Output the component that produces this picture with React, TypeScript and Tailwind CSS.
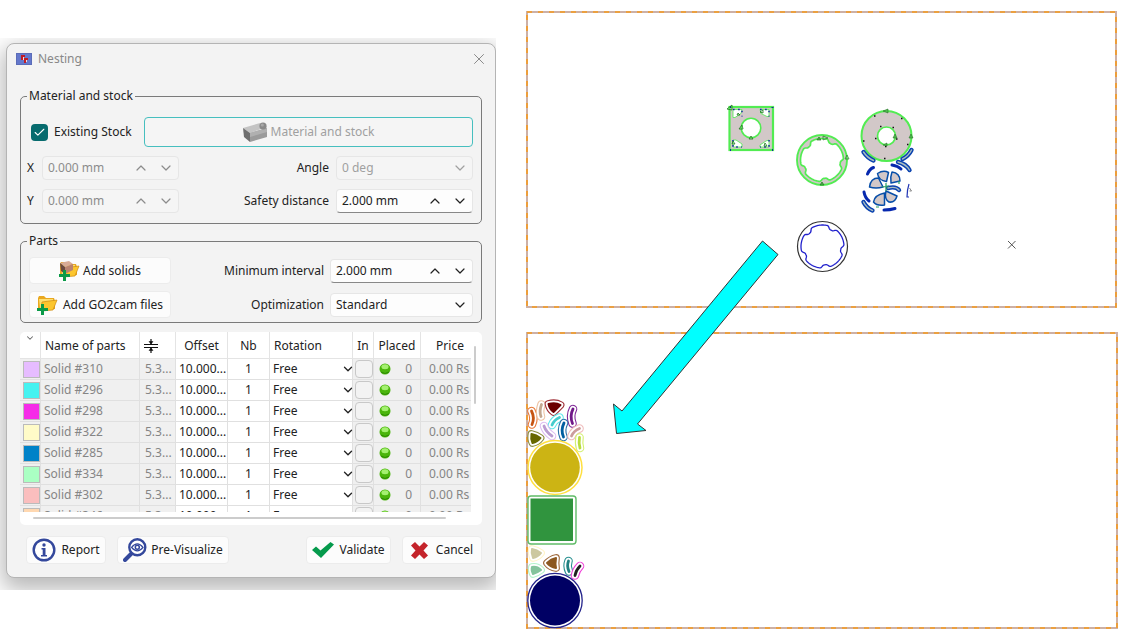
import { ReactNode } from "react";
import { Check, ChevronDown, ChevronUp, X } from "lucide-react";

interface Part {
  name: string;
  color: string;
}

const parts: Part[] = [
  { name: "Solid #310", color: "#e6bcff" },
  { name: "Solid #296", color: "#45f2f0" },
  { name: "Solid #298", color: "#f52be8" },
  { name: "Solid #322", color: "#fffbc8" },
  { name: "Solid #285", color: "#0082c8" },
  { name: "Solid #334", color: "#aaffc3" },
  { name: "Solid #302", color: "#fabebe" },
  { name: "Solid #346", color: "#ffd8b1" },
];

/* ---------- icons ---------- */

function NestingIcon() {
  return (
    <svg width="16" height="12" viewBox="0 0 16 12">
      <rect width="16" height="12" fill="#5b6cb8" />
      <rect x="1" y="1" width="14" height="10" fill="#6478cc" />
      <path d="M5 2h4v2H7v3H5zM8 5h4v2h-2v3H8z" fill="#c01c24" />
      <path d="M7 4h1v3H7zM10 7h1v2h-1z" fill="#f4dcdc" />
    </svg>
  );
}

function StockIcon() {
  return (
    <svg width="24" height="20" viewBox="0 0 24 20">
      <path d="M0 6 17 1l7 4-17 6z" fill="#c4c4c4" />
      <path d="m0 6 7 5v9l-6-5z" fill="#6f6f6f" />
      <path d="m7 11 17-5v9L7 20z" fill="#9b9b9b" />
      <path d="m7 11 17-5v4L7 15z" fill="#b0b0b0" />
      <circle cx="20" cy="4" r="3.6" fill="#8a8a8a" />
      <circle cx="19.3" cy="3" r="1.6" fill="#a9a9a9" />
    </svg>
  );
}

function FolderIcon({ solid }: { solid?: boolean }) {
  return (
    <svg width="21" height="20" viewBox="0 0 21 20">
      <path d="M1 3 2 1h5l2 2h8l1 3v8L4 16 1 13z" fill="#e9a820" />
      <path d="M2 4h14v9H3z" fill="#ffdf70" />
      <path d="m5 7 15-2-4 10-12 1z" fill="#fcc62e" stroke="#cf8a10" strokeWidth="0.7" />
      {solid && (
        <>
          <path d="m1 2 9-2 4 3-8 3z" fill="#d8ab96" />
          <path d="m1 2 5 4v7l-4-3z" fill="#6b4a40" />
          <path d="m6 6 8-3v6l-8 4z" fill="#b98371" />
        </>
      )}
      <path d="M4 9h3v4h4v3H7v4H4v-4H0v-3h4z" fill="#0b9a48" />
    </svg>
  );
}

function HeightIcon() {
  return (
    <svg width="14" height="16" viewBox="0 0 14 16" stroke="#111" fill="#111">
      <path d="M0 6.5h14M0 9.5h14" strokeWidth="1.2" />
      <path d="M7 1v5M7 10v5" strokeWidth="1.2" />
      <path d="M5 3.500h4L7 6zM5 12.500h4L7 10z" strokeWidth="0.5" />
    </svg>
  );
}

function InfoIcon() {
  return (
    <svg width="24" height="24" viewBox="0 0 24 24">
      <circle cx="12" cy="12" r="10.3" fill="#fff" stroke="#34489c" strokeWidth="2.4" />
      <circle cx="12" cy="7" r="1.7" fill="#34489c" />
      <path d="M9.5 10h4v7h1.5v1.6H9V17h1.7v-5.4H9.5z" fill="#34489c" />
    </svg>
  );
}

function PreviewIcon() {
  return (
    <svg width="24" height="24" viewBox="0 0 24 24" fill="none" stroke="#34489c">
      <path d="m2 22 6.5-6.5" strokeWidth="4" strokeLinecap="round" />
      <circle cx="14.3" cy="9.3" r="8" fill="#fff" strokeWidth="2.4" />
      <path d="M8.6 9.3q5.7-7 11.4 0-5.7 7-11.4 0z" strokeWidth="1.3" />
      <circle cx="14.3" cy="9.3" r="2" strokeWidth="1.5" />
    </svg>
  );
}

function ValidateIcon() {
  return (
    <svg width="22" height="16" viewBox="0 0 22 16">
      <path d="m0 8 4-3.5 4.5 4L18.500 0 22 2.500 9 16z" fill="#059a4c" />
    </svg>
  );
}

function CancelIcon() {
  return (
    <svg width="17" height="17" viewBox="0 0 17 17">
      <path
        d="M4 0 8.500 4.500 13 0l4 3.500-4.500 5 4.500 5L13 17l-4.500-4.500L4 17 0 13.500l4.500-5L0 3.500z"
        fill="#c4242b"
      />
    </svg>
  );
}

function Led() {
  return (
    <svg width="12" height="12" viewBox="0 0 12 12" className="block">
      <circle cx="6" cy="6" r="5.500" fill="#4bb50c" />
      <ellipse cx="6" cy="3.800" rx="3.600" ry="2.500" fill="#a4f070" />
      <path d="M2 9q4 3 8 0" stroke="#2e8a04" fill="none" />
    </svg>
  );
}

/* ---------- form controls ---------- */

interface FieldProps {
  id: string;
  value: string;
  disabled?: boolean;
  className: string;
}

function SpinField({ id, value, disabled, className }: FieldProps) {
  return (
    <div
      className={`flex h-6 items-center rounded border border-[#e6e6e6] pr-1 ${className} ${
        disabled ? "bg-[#f5f5f5] text-[#8c8c8c]" : "border-b-[#888] bg-[#fdfdfd] text-[#222]"
      }`}
    >
      <input
        id={id}
        defaultValue={value}
        disabled={disabled}
        className="w-0 min-w-0 flex-1 bg-transparent pl-[5px] outline-none"
      />
      <button type="button" aria-label="Increase" disabled={disabled} className="mr-[9px]">
        <ChevronUp size={16} strokeWidth={1.8} />
      </button>
      <button type="button" aria-label="Decrease" disabled={disabled}>
        <ChevronDown size={16} strokeWidth={1.8} />
      </button>
    </div>
  );
}

function SelectField({ id, value, disabled, className }: FieldProps) {
  return (
    <div
      className={`relative h-6 rounded border border-[#e6e6e6] ${className} ${
        disabled ? "bg-[#f5f5f5] text-[#a0a0a0]" : "bg-[#fdfdfd] text-[#222]"
      }`}
    >
      <select
        id={id}
        disabled={disabled}
        className="h-full w-full appearance-none bg-transparent pl-[5px] opacity-100 outline-none"
      >
        <option>{value}</option>
      </select>
      <ChevronDown
        size={16}
        strokeWidth={1.8}
        className="pointer-events-none absolute top-[3px] right-1"
      />
    </div>
  );
}

function ToolButton({
  icon,
  label,
  className,
}: {
  icon: ReactNode;
  label: string;
  className: string;
}) {
  return (
    <button
      type="button"
      className={`flex items-center justify-center rounded border border-[#ececec] bg-[#fcfcfc] whitespace-nowrap ${className}`}
    >
      {icon}
      {label}
    </button>
  );
}

/* ---------- parts table ---------- */

function PartsTable() {
  const head = "border-r border-b border-[#e4e4e4] pt-px font-normal";
  const cell = "border-r border-b border-[#e0e0e0] whitespace-nowrap";
  const locked = "bg-[#f0f0f0] text-[#858585]";
  return (
    <div className="relative rounded-[5px] bg-white pr-[11px] pb-[13px]">
      <div className="h-[180px] overflow-hidden">
        <table className="w-full table-fixed border-separate border-spacing-0">
          <colgroup>
            <col className="w-[21px]" />
            <col />
            <col className="w-[36px]" />
            <col className="w-[52px]" />
            <col className="w-[42px]" />
            <col className="w-[83px]" />
            <col className="w-[21px]" />
            <col className="w-[47px]" />
            <col className="w-[50px]" />
          </colgroup>
          <thead>
            <tr className="h-[27px]">
              <th className={`${head} align-top`} aria-label="Color">
                <ChevronDown size={10} strokeWidth={2.5} className="mx-auto text-[#666]" />
              </th>
              <th className={`${head} pl-1 text-left`}>Name of parts</th>
              <th className={head} aria-label="Height">
                <span className="flex pl-1">
                  <HeightIcon />
                </span>
              </th>
              <th className={head}>Offset</th>
              <th className={head}>Nb</th>
              <th className={`${head} pl-1 text-left`}>Rotation</th>
              <th className={head}>In</th>
              <th className={head}>Placed</th>
              <th className="border-b border-[#e4e4e4] pt-px pl-2 font-normal">Price</th>
            </tr>
          </thead>
          <tbody>
            {parts.map((part) => (
              <tr key={part.name} className="h-[21px]">
                <td className={`${cell} ${locked}`}>
                  <span
                    className="ml-[3px] block size-[17px] border border-[#bbb]"
                    style={{ backgroundColor: part.color }}
                  />
                </td>
                <td className={`${cell} ${locked} pl-[3px]`}>{part.name}</td>
                <td className={`${cell} ${locked} pl-[5px]`}>5.3...</td>
                <td className={`${cell} pl-[3px]`}>10.000...</td>
                <td className={`${cell} text-center`}>1</td>
                <td className={cell}>
                  <div className="relative">
                    <select
                      aria-label={`Rotation of ${part.name}`}
                      className="block w-full appearance-none bg-transparent pl-[3px] outline-none"
                    >
                      <option>Free</option>
                    </select>
                    <ChevronDown
                      size={14}
                      strokeWidth={2.2}
                      className="pointer-events-none absolute top-px -right-[3px]"
                    />
                  </div>
                </td>
                <td className={`${cell} ${locked}`}>
                  <input
                    type="checkbox"
                    disabled
                    aria-label={`${part.name} in`}
                    className="ml-[2px] block size-[18px] appearance-none rounded border border-[#c8c8c8] bg-[#f3f3f3]"
                  />
                </td>
                <td className={`${cell} ${locked}`}>
                  <span className="flex items-center justify-between pr-2 pl-[5px]">
                    <Led />0
                  </span>
                </td>
                <td className={`border-b border-[#e0e0e0] pl-2 whitespace-nowrap ${locked}`}>
                  0.00 Rs
                </td>
              </tr>
            ))}
          </tbody>
        </table>
      </div>
      <div className="absolute top-[14px] right-[6px] h-[58px] w-[2px] rounded bg-[#ccc]" />
      <div className="absolute right-9 bottom-[6px] left-[13px] h-[2px] rounded bg-[#ccc]" />
    </div>
  );
}

/* ---------- dialog ---------- */

function NestingDialog() {
  const group = "min-w-0 rounded-[5px] border border-[#7a7a7a] pr-2 pl-[6px]";
  return (
    <form className="rounded-lg border border-[#b4b4b4] bg-[#f3f3f3] px-[13px] pb-[13px] shadow-[0_8px_22px_4px_rgba(0,0,0,0.28)]">
      <header className="mb-[14px] flex h-[30px] items-center text-[#888]">
        <span className="-ml-1">
          <NestingIcon />
        </span>
        <h1 className="ml-[6px] flex-1">Nesting</h1>
        <button type="button" aria-label="Close" className="-mr-[6px]">
          <X size={18} strokeWidth={1.3} />
        </button>
      </header>

      <div className="flex flex-col gap-[9px]">
        <fieldset className={`${group} pb-[10px]`}>
          <legend className="h-4 px-[2px] leading-4">Material and stock</legend>
          <div className="flex flex-col gap-[9px] pt-[13px]">
            <div className="flex h-[30px] items-center">
              <label className="flex items-center gap-[6px] pl-1">
                <span className="relative block size-[17px]">
                  <input
                    type="checkbox"
                    defaultChecked
                    className="block size-[17px] appearance-none rounded bg-[#076b6e]"
                  />
                  <Check
                    size={13}
                    strokeWidth={2}
                    className="pointer-events-none absolute top-[2px] left-[2px] text-white"
                  />
                </span>
                Existing Stock
              </label>
              <button
                type="button"
                className="ml-auto flex h-full w-[329px] items-center justify-center gap-1 rounded border border-[#46bfbf] bg-[#f5f5f5] text-[#a0a0a0]"
              >
                <StockIcon />
                Material and stock
              </button>
            </div>
            <div className="flex items-center">
              <label htmlFor="pos-x" className="w-[15px]">
                X
              </label>
              <SpinField id="pos-x" value="0.000 mm" disabled className="w-[137px]" />
              <label htmlFor="angle" className="mr-[7px] ml-auto">
                Angle
              </label>
              <SelectField id="angle" value="0 deg" disabled className="w-[137px]" />
            </div>
            <div className="flex items-center">
              <label htmlFor="pos-y" className="w-[15px]">
                Y
              </label>
              <SpinField id="pos-y" value="0.000 mm" disabled className="w-[137px]" />
              <label htmlFor="safety" className="mr-[7px] ml-auto">
                Safety distance
              </label>
              <SpinField id="safety" value="2.000 mm" className="w-[137px]" />
            </div>
          </div>
        </fieldset>

        <fieldset className={`${group} pb-1`}>
          <legend className="h-4 px-[2px] leading-4">Parts</legend>
          <div className="flex flex-col gap-[7px] pt-2 pl-[2px]">
            <div className="flex items-center">
              <ToolButton icon={<FolderIcon solid />} label="Add solids" className="h-[27px] w-[142px] gap-[3px]" />
              <label htmlFor="interval" className="mr-[6px] ml-auto">
                Minimum interval
              </label>
              <SpinField id="interval" value="2.000 mm" className="w-[143px]" />
            </div>
            <div className="flex items-center">
              <ToolButton icon={<FolderIcon />} label="Add GO2cam files" className="h-[27px] w-[142px] gap-[5px]" />
              <label htmlFor="optimization" className="mr-[6px] ml-auto">
                Optimization
              </label>
              <SelectField id="optimization" value="Standard" className="w-[143px]" />
            </div>
          </div>
        </fieldset>

        <PartsTable />
      </div>

      <footer className="mt-[11px] flex h-7 gap-[11px] pl-[6px]">
        <ToolButton icon={<InfoIcon />} label="Report" className="w-[80px] gap-[5px]" />
        <ToolButton icon={<PreviewIcon />} label="Pre-Visualize" className="w-[112px] gap-1" />
        <ToolButton icon={<ValidateIcon />} label="Validate" className="ml-auto w-[85px] gap-[5px]" />
        <ToolButton icon={<CancelIcon />} label="Cancel" className="w-[80px] gap-2" />
      </footer>
    </form>
  );
}

/* ---------- sheets ---------- */

// Circle with five small rounded notches pushed in towards the centre
function notchedRing(cx: number, cy: number, r: number) {
  const points: string[] = [];
  for (let a = 0; a < 360; a += 2) {
    const off = ((a - 10 + 36 + 360) % 72) - 36;
    const dip = 3 * Math.exp(-Math.pow(off / 10, 4));
    const t = (a * Math.PI) / 180;
    points.push(`${(cx + (r - dip) * Math.cos(t)).toFixed(2)} ${(cy + (r - dip) * Math.sin(t)).toFixed(2)}`);
  }
  return `M${points.join("L")}Z`;
}

function SheetOutline({ x, y, width }: { x: number; y: number; width: number }) {
  return (
    <>
      <rect x={x} y={y} width={width} height="295" fill="#fff" stroke="#ccb0a6" strokeWidth="2" />
      <rect x={x} y={y} width={width} height="295" fill="none" stroke="#f59a20" strokeWidth="1.600" strokeDasharray="5 6" />
    </>
  );
}

function Slot({ d, color, inner }: { d: string; color: string; inner: string }) {
  return (
    <g fill="none" strokeLinecap="round">
      <path d={d} stroke={color} strokeWidth="8.600" />
      <path d={d} stroke="#fff" strokeWidth="6.400" />
      <path d={d} stroke={inner} strokeWidth="2.800" />
    </g>
  );
}

function Wedge({ d, color, inner }: { d: string; color: string; inner: string }) {
  return (
    <g strokeLinejoin="round">
      <path d={d} fill={color} stroke={color} strokeWidth="7.800" />
      <path d={d} fill="#fff" stroke="#fff" strokeWidth="5.600" />
      <path d={d} fill={inner} stroke={inner} strokeWidth="2" />
    </g>
  );
}

const openSlots = [
  "M863.500 152q4 6 10 8.500",
  "M911.500 150q-3 6-9 9",
  "M898 162q8 2 11.500 8",
  "M888 188q8-2 11 2",
  "M863.500 202q3 6 9 8.500",
];
const filledSlots = ["M867.500 174q2-5 6-6.500", "M892 165q6 1 9 4", "M864 192q1 6 5 9", "M884 210q6 0 11-1.500"];
const blades = [
  "M877.500 173.500q6-4 11-1l-2 9q-8-1-9-8z",
  "M892 172q8 1 8 9l-9 2q-1-6 1-11z",
  "M869.500 187q1-9 9-9l4.500 9q-7 2-13.500 0z",
  "M873.500 202q1-7 11-9v12q-8 1-11-3z",
  "M886 191l11 5q-2 7-8 6-5-3-3-11z",
];

function StockSheet() {
  return (
    <svg viewBox="526 11 592 297" className="block w-full">
      <SheetOutline x={527} y={12} width={589} />
      {/* square plate */}
      <rect x="729.500" y="107" width="43.500" height="43" fill="#d2c8c8" stroke="#52ec52" strokeWidth="2.200" />
      <circle cx="751" cy="128" r="9.800" fill="#fff" stroke="#52ec52" strokeWidth="1.600" />
      <g fill="#fff" stroke="#52ec52" strokeWidth="0.800">
        <path d="M733 109.500h9l-1 4-6 4h-2zM760 109.500h9v7h-2l-6-3zM733 147v-7h3l6 4v3zM769 147v-7l-3 1-6 4v2z" />
      </g>
      <path d="M733 109.500h9v7M760 109.500h9v7M733 140v7h9M769 140v7h-9" fill="none" stroke="#1526a0" strokeWidth="1.500" strokeDasharray="1.600 3.500" />
      <path d="M730 107h1M772.500 107v1M730 150h1M772 150h1" stroke="#1526a0" strokeWidth="2" />
      <g fill="none" stroke="#187818" strokeWidth="0.800">
        <path d="M727 109l5-4v5zM739 129h4l-1-4zM749 139h4l-2-3zM737 115h3l-2-2zM760 112l3-2v3zM732 144h3l-2-3zM764 146h3l-2-3z" />
      </g>

      {/* notched ring */}
      <circle cx="822" cy="160" r="25" fill="#d2c8c8" stroke="#52ec52" strokeWidth="1.900" />
      <path d={notchedRing(822, 160, 21.5)} fill="#fff" stroke="#52ec52" strokeWidth="1.700" />
      <g fill="#48b848" stroke="#267226" strokeWidth="0.700">
        <path d="M817 140h4l-2-3zM820 185h4l-2-3z" />
        <path d="M823 136v4l5-2zM845 159h4l-2-4z" fill="none" />
      </g>

      {/* disc */}
      <circle cx="886.500" cy="136" r="25" fill="#d2c8c8" stroke="#52ec52" strokeWidth="2" />
      <circle cx="886.500" cy="136" r="9" fill="#fff" stroke="#52ec52" strokeWidth="1.700" />
      <path
        d="M874 116h1.500M901 118.500h1.500M880 126.500h1.500M892.500 127.500h1.500M875 138.500h1.500M863 141h1.500M896 139h1.500M907 144.500h1.500M885 146.500h1.500M884 158.500h1.500"
        stroke="#111"
        strokeWidth="1.700"
      />
      <path d="M888 109l-5 2 5 2zM909 138h4l-2-4zM893 138h4l-2-4zM887 143l-4 2 4 1z" fill="#50bc50" stroke="#267226" strokeWidth="0.600" />

      {/* slots and blades */}
      <g fill="none" strokeLinecap="round">
        {openSlots.map((d) => (
          <g key={d}>
            <path d={d} stroke="#0a42b0" strokeWidth="4.400" />
            <path d={d} stroke="#a8bcc0" strokeWidth="1.400" />
          </g>
        ))}
        {filledSlots.map((d) => (
          <path key={d} d={d} stroke="#0628ae" strokeWidth="3" />
        ))}
      </g>
      <g fill="#d2c8c8" stroke="#074ea8" strokeWidth="1.500" strokeLinejoin="round">
        {blades.map((d) => (
          <path key={d} d={d} />
        ))}
      </g>
      <path d="M886 183v8M882 187l7-1M899 181v3M876 207h3" stroke="#27a060" strokeWidth="1.200" />
      <path d="M909 184q-2 6-2 13h2" fill="none" stroke="#2035b5" strokeWidth="1.200" />
      <path d="M909.500 188l2 3h-2" fill="none" stroke="#555" strokeWidth="0.700" />

      {/* ring outline only */}
      <circle cx="822.500" cy="246.500" r="25" fill="none" stroke="#333" strokeWidth="1.200" />
      <path d={notchedRing(822.5, 246.5, 21.5)} fill="none" stroke="#2020cc" strokeWidth="1.300" />

      <path d="M1008 241l7.500 7.500M1015.500 241l-7.500 7.500" stroke="#444" strokeWidth="0.900" />
    </svg>
  );
}

function NestedSheet() {
  return (
    <svg viewBox="526 332 592 297" className="block w-full">
      <SheetOutline x={527} y={333} width={590} />

      <Slot d="M531.500 411q3.500 7 .5 13.500" color="#e87838" inner="#c65412" />
      <Slot d="M541.500 404.500q-2.500 7-.5 12" color="#eec4a4" inner="#c4a890" />
      <Wedge d="M548.500 404q7-2 12 1-2 2-7 7-4-3-5-8z" color="#a03038" inner="#6c0000" />
      <Slot d="M552 425q2-5 7.500-7.500" color="#60e8ea" inner="#45cccc" />
      <Slot d="M573 409q-3.500 7-.5 14.500" color="#802898" inner="#701888" />
      <Slot d="M544 426q2 6 8 10" color="#dcbcf0" inner="#ba9cd0" />
      <Slot d="M564 423q-3.500 7-.5 14" color="#2870a8" inner="#005fa0" />
      <Slot d="M571.500 436q2-5 8-7.500" color="#f0bcbc" inner="#cc9c9c" />
      <Slot d="M579.500 437.500q-1 6 .5 10.500" color="#d4f070" inner="#b8dc40" />
      <Wedge d="M531.500 434q5 1 9 4-3 4-8 5-2-4-1-9z" color="#8c8c3c" inner="#686800" />

      <circle cx="555" cy="467.500" r="27" fill="#fff" stroke="#ffe040" strokeWidth="1.500" />
      <circle cx="555" cy="467.500" r="24.800" fill="#ccb414" />

      <rect x="528" y="496" width="48" height="48" rx="3" fill="#fff" stroke="#60bc68" strokeWidth="1.400" />
      <rect x="530.500" y="498.500" width="42.500" height="42.500" fill="#30943e" />

      <Wedge d="M532 549q5 1 9 4-3 4-8 5-2-5-1-9z" color="#fff4c8" inner="#ccc8a0" />
      <Wedge d="M532 567q5-1 9 3-4 3-8 4-2-4-1-7z" color="#b4f4cc" inner="#84c49c" />
      <Wedge d="M547 563q4-4 9-5-1 6 0 10-6-1-9-5z" color="#a06c40" inner="#8c5820" />
      <Slot d="M568.500 561q-2 5 .5 10.500" color="#289090" inner="#208080" />
      <Slot d="M580 566q-4 4-5 9.500" color="#f040d8" inner="#202020" />

      <circle cx="555" cy="600.500" r="27.200" fill="#fff" stroke="#24248c" strokeWidth="1.300" />
      <circle cx="555" cy="600.500" r="25" fill="#000064" />
    </svg>
  );
}

export default function App() {
  return (
    <main className="grid grid-cols-[496fr_592fr] items-start gap-[30px] bg-white pr-[3px] font-['Noto_Sans',sans-serif] text-[12px] leading-4 text-[#222]">
      <section className="mt-[38px] min-w-0 overflow-hidden pt-[5px] pb-3 pl-[6px]">
        <NestingDialog />
      </section>
      <section className="relative mt-[11px] flex min-w-0 flex-col gap-6">
        <StockSheet />
        <NestedSheet />
        <svg viewBox="526 11 592 618" className="pointer-events-none absolute inset-0 w-full">
          <path
            d="M762.500 241 778 254.500 637.500 424l8.500 6.500-29.500 3-3-29.500 8.500 7z"
            fill="#00ffff"
            stroke="#333"
            strokeWidth="1"
          />
        </svg>
      </section>
    </main>
  );
}
